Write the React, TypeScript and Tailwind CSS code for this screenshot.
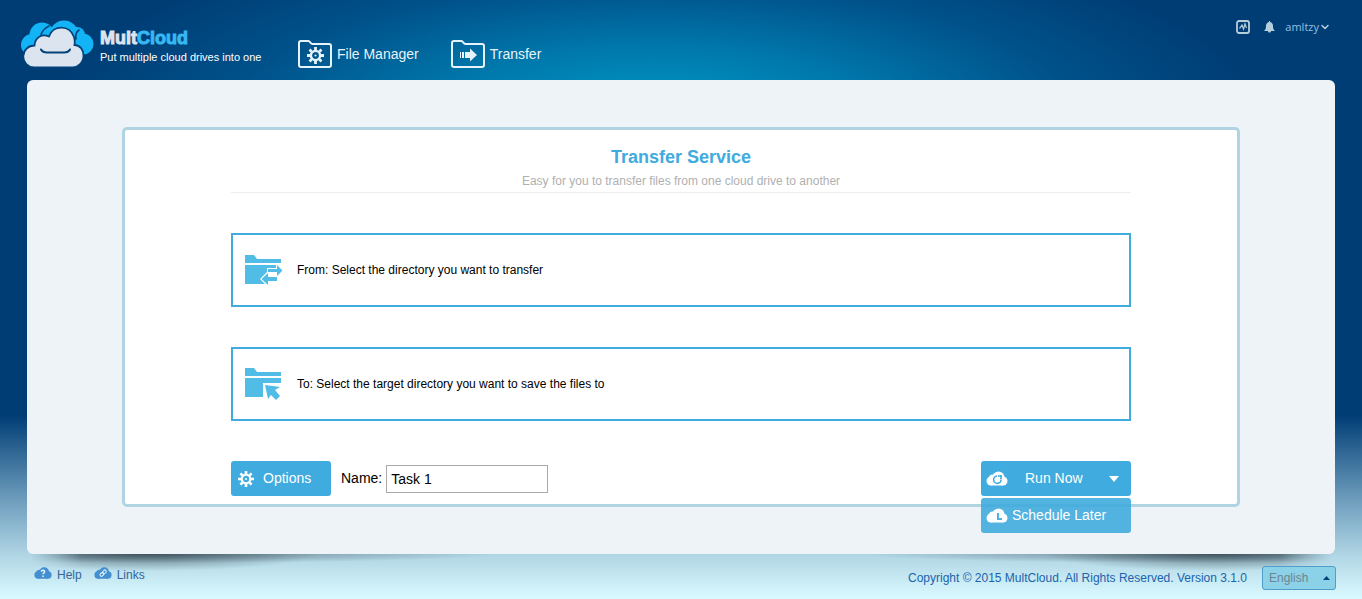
import React from 'react';
import { ChevronDown } from 'lucide-react';

const Logo: React.FC = () => (
  <svg className="h-12 w-[74px] shrink-0" viewBox="0 0 74 48" fill="none">
    <g fill="#12b4f5">
      <circle cx="12" cy="25" r="11" />
      <circle cx="22" cy="15" r="12.500" />
      <circle cx="44" cy="15" r="14.500" />
      <circle cx="57" cy="15" r="8" />
      <circle cx="63" cy="24" r="10.500" />
      <path d="M12 12h46v22H12z" />
    </g>
    <path d="M21 16c0-4 4-8 8-10M59 10c-3 2-4 4-3 9" stroke="#02427b" strokeWidth="1.600" strokeLinecap="round" />
    <path
      d="M14 47.500A11 11 0 0 1 14.500 25.500C15 17 22 13.500 29 16.500C33 4.500 50 4.500 54 17C55 20 55 22 54.500 25C60 25 63.500 30 63.500 35.500A11 12 0 0 1 52 47.500Z"
      fill="#dce5ef"
      stroke="#02427b"
      strokeWidth="1.800"
    />
    <path d="M21 29.500c1 2 3 3 6 3h17c3 0 5-1 6-3" stroke="#02427b" strokeWidth="2" strokeLinecap="round" />
  </svg>
);

const GearShape: React.FC = () => (
  <>
    <circle cx="8" cy="8" r="4.300" strokeWidth="2.200" />
    <circle cx="8" cy="8" r="1" fill="currentColor" stroke="none" />
    <path
      d="M8 0v3M8 13v3M0 8h3M13 8h3M2.400 2.400l2 2M11.600 11.600l2 2M13.600 2.400l-2 2M4.400 11.600l-2 2"
      strokeWidth="2.600"
    />
  </>
);

const FolderOutline: React.FC<{ children: React.ReactNode }> = ({ children }) => (
  <svg className="h-7 w-[34px]" viewBox="0 0 34 28" fill="none" stroke="currentColor">
    <path
      d="M3 1h7.500c1.500 0 2 3 4 3H31a2 2 0 0 1 2 2v19a2 2 0 0 1-2 2H3a2 2 0 0 1-2-2V3a2 2 0 0 1 2-2Z"
      strokeWidth="2"
    />
    {children}
  </svg>
);

const FromIcon: React.FC = () => (
  <svg className="h-[34px] w-[38px]" viewBox="0 0 38 34" fill="#51bce6">
    <path d="M0 2h9l3 4h24v4H0zM0 12h31v3h-9v4l-7 7 5 5H0z" />
    <path d="M23 16h9v-4l5.500 5.500L32 23v-4h-9z" />
    <path d="M23 20v4h9v4h-9v4l-6.500-6z" />
  </svg>
);

const ToIcon: React.FC = () => (
  <svg className="h-[34px] w-[38px]" viewBox="0 0 38 34" fill="#51bce6">
    <path d="M0 1h9l3 4h24v4H0zM0 11h36v5H18v14H0z" />
    <path d="M20 18l15 2-5 3 5 6-4 4-5-5-3 4z" />
  </svg>
);

const Cloud: React.FC<{ className: string; children: React.ReactNode }> = ({ className, children }) => (
  <svg className={className} viewBox="0 0 22 15" fill="none">
    <g fill="currentColor">
      <circle cx="12.500" cy="6.500" r="6" />
      <circle cx="6.500" cy="7" r="3.500" />
      <circle cx="5" cy="10" r="4.500" />
      <circle cx="17" cy="10" r="4.500" />
      <path d="M5 7h12v7.500H5z" />
    </g>
    {children}
  </svg>
);

const directories = [
  { label: 'From: Select the directory you want to transfer', icon: <FromIcon /> },
  { label: 'To: Select the target directory you want to save the files to', icon: <ToIcon /> },
];

const Header: React.FC = () => (
  <header className="flex h-20 items-start justify-between pl-5 pr-[31px]">
    <div className="flex">
      <a href="#" className="flex gap-1.5 pt-5">
        <Logo />
        <span className="w-[198px] pt-2">
          <span className="block text-[18px] font-bold leading-5 text-[#dce5ef] [-webkit-text-stroke:1px_currentColor]">
            Mult<span className="text-[#36b9f3]">Cloud</span>
          </span>
          <span className="block text-[11px] leading-[18px] text-white">Put multiple cloud drives into one</span>
        </span>
      </a>
      <nav className="flex gap-8 pt-10 text-[14px] text-[#e6f3fa]">
        <a href="#" className="flex h-7 items-center gap-[5px]">
          <FolderOutline>
            <svg x="9" y="7" width="17" height="17" viewBox="0 0 16 16">
              <GearShape />
            </svg>
          </FolderOutline>
          File Manager
        </a>
        <a href="#" className="flex h-7 items-center gap-[5px]">
          <FolderOutline>
            <path
              d="M9 12h1v6H9zM11 12h2v6h-2zM14 12h5V8.500l7 6.500-7 6.500V18h-5z"
              fill="currentColor"
              stroke="none"
            />
          </FolderOutline>
          Transfer
        </a>
      </nav>
    </div>
    <div className="flex items-center pt-[18px] text-[#b5cfdc]">
      <button aria-label="Activity">
        <svg className="h-[14px] w-[14px]" viewBox="0 0 14 14" fill="none" stroke="currentColor">
          <rect x="1" y="1" width="12" height="12" rx="2" strokeWidth="1.800" />
          <path d="M3 8h1l2-3 1.500 4L9 4l1.500 4" strokeWidth="1.200" />
        </svg>
      </button>
      <button aria-label="Notifications" className="ml-[14px]">
        <svg className="h-3 w-[11px]" viewBox="0 0 11 12" fill="currentColor">
          <path d="M5 0h1v1c2 .5 3 2 3 4 0 2.500.500 3.500 2 5H0c1.500-1.500 2-2.500 2-5 0-2 1-3.500 3-4zM4 10h3c0 2-3 2-3 0z" />
        </svg>
      </button>
      <button className="ml-2.5 flex items-center font-['Open_Sans',sans-serif] text-[11px] leading-[18px] text-[#8fc0e6]">
        amltzy
        <ChevronDown className="h-3 w-3 text-[#b5cfdc]" strokeWidth={3} />
      </button>
    </div>
  </header>
);

const TransferPanel: React.FC = () => (
  <section className="rounded-[5px] border-[3px] border-[#b0d4e1] bg-white pb-2 pt-4">
    <div className="mx-auto max-w-[900px]">
      <div className="border-b border-[#eee] pb-0.5 text-center">
        <h1 className="text-[18px] font-bold leading-[22px] text-[#40abde]">Transfer Service</h1>
        <p className="pt-1 text-[12px] leading-[18px] text-[#b0b0b0]">
          Easy for you to transfer files from one cloud drive to another
        </p>
      </div>
      {directories.map((dir) => (
        <button
          key={dir.label}
          className="mt-10 flex h-[74px] w-full items-center gap-3.5 border-2 border-[#40abde] px-3 text-left text-[12px] text-black"
        >
          {dir.icon}
          {dir.label}
        </button>
      ))}
      <div className="mt-10 flex items-start justify-between text-[14px]">
        <div className="flex items-center">
          <button className="flex h-[35px] w-[100px] items-center gap-[9px] rounded-[3px] bg-[#40abde] pl-[7px] text-white">
            <svg className="h-4 w-4" viewBox="0 0 16 16" fill="none" stroke="currentColor">
              <GearShape />
            </svg>
            Options
          </button>
          <label htmlFor="task-name" className="pl-2.5 pr-1 text-black">
            Name:
          </label>
          <input
            id="task-name"
            defaultValue="Task 1"
            className="h-7 w-[162px] border border-[#aaa] bg-white px-1 text-black outline-none"
          />
        </div>
        <div className="relative w-[150px] text-white">
          <button className="flex h-[35px] w-full items-center rounded-[3px] bg-[#40abde] pl-[5px] pr-3">
            <Cloud className="h-[15px] w-[22px]">
              <path d="M15 8.500A3.700 3.700 0 1 1 11 5M12 5h3.500M15 4v4" stroke="#40abde" strokeWidth="1.600" />
            </Cloud>
            <span className="flex-1 pl-[17px] text-left">Run Now</span>
            <svg className="h-1.5 w-2.5" viewBox="0 0 10 6" fill="currentColor">
              <path d="M0 0h10L5 6z" />
            </svg>
          </button>
          <button className="absolute left-0 top-full mt-0.5 flex h-[35px] w-full items-center gap-1 rounded-[3px] bg-[#40abde]/90 pl-[5px]">
            <Cloud className="h-[15px] w-[22px]">
              <path d="M12 5v6h4" stroke="#4fb1e0" strokeWidth="2" />
            </Cloud>
            Schedule Later
          </button>
        </div>
      </div>
    </div>
  </section>
);

const Footer: React.FC = () => (
  <footer className="relative flex h-[45px] items-start justify-between pl-[34px] pr-[26px] pt-3 text-[12px]">
    <div className="flex gap-3 text-[#33659b]">
      <a href="#" className="flex gap-[5px]">
        <Cloud className="h-[14px] w-[18px] text-[#438fd0]">
          <path d="M9 6c0-2.500 4-2.500 4 0 0 1.500-2 1.500-2 3M11 10.500v2" stroke="#e6f7fc" strokeWidth="1.800" />
        </Cloud>
        Help
      </a>
      <a href="#" className="flex gap-[5px]">
        <Cloud className="h-[14px] w-[18px] text-[#438fd0]">
          <g stroke="#e6f7fc" strokeWidth="1.200">
            <rect x="7" y="7.500" width="5" height="3.500" rx="1.500" transform="rotate(-45 9.500 9)" />
            <rect x="10" y="4.500" width="5" height="3.500" rx="1.500" transform="rotate(-45 12.500 6)" />
          </g>
        </Cloud>
        Links
      </a>
    </div>
    <div className="flex items-center gap-[15px]">
      <span className="text-[#1b63ad]">Copyright © 2015 MultCloud. All Rights Reserved. Version 3.1.0</span>
      <div className="relative">
        <select
          aria-label="Language"
          className="block h-6 w-[74px] appearance-none rounded-[3px] border border-[#4f9dcb] bg-[#8bd1e8] pl-1.5 text-[12px] text-[#6f8490]"
        >
          <option>English</option>
        </select>
        <svg className="pointer-events-none absolute right-1.5 top-2.5 h-1 w-[7px]" viewBox="0 0 7 4" fill="#03427e">
          <path d="M0 4h7L3.500 0z" />
        </svg>
      </div>
    </div>
  </footer>
);

const SHADOW =
  'absolute top-full h-5 w-[480px] bg-[radial-gradient(ellipse_340px_9px_at_125px_0,rgba(25,40,50,0.45),transparent),radial-gradient(ellipse_170px_17px_at_115px_0,rgba(25,40,50,0.55),transparent)] [mask-image:linear-gradient(to_right,transparent,black_50px)]';

const App: React.FC = () => (
  <div className="min-h-screen overflow-hidden bg-[linear-gradient(to_bottom,#003d75_0,#003d75_415px,#6e9dbd_500px,#b0d5e4_555px,#dafaff_599px)] font-['Liberation_Sans',Arial,sans-serif]">
    <div className="bg-[radial-gradient(ellipse_600px_180px_at_48%_110px,#0098c8_0,#0078ab_35%,#00518a_70%,#003d75_100%)]">
      <Header />
    </div>
    <div className="relative mx-[27px]">
      <main className="rounded-[6px] bg-[#edf3f6] px-[95px] pb-[47px] pt-[47px]">
        <TransferPanel />
      </main>
      {/* Lifted page corners */}
      <div className={`${SHADOW} left-1`} />
      <div className={`${SHADOW} right-1 -scale-x-100`} />
    </div>
    <Footer />
  </div>
);

export default App;
